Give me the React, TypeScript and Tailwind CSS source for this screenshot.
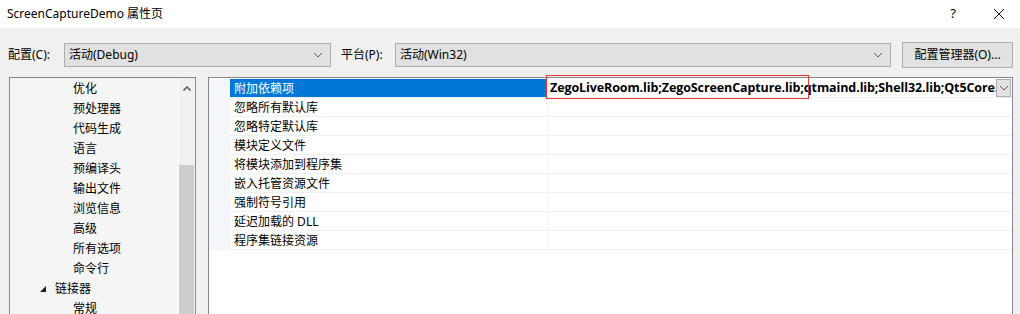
const treeItems = [
  "优化",
  "预处理器",
  "代码生成",
  "语言",
  "预编译头",
  "输出文件",
  "浏览信息",
  "高级",
  "所有选项",
  "命令行",
];

const props = [
  "附加依赖项",
  "忽略所有默认库",
  "忽略特定默认库",
  "模块定义文件",
  "将模块添加到程序集",
  "嵌入托管资源文件",
  "强制符号引用",
  "延迟加载的 DLL",
  "程序集链接资源",
];

const font = { fontFamily: '"Noto Sans", "Noto Sans CJK SC", sans-serif' };

function Chevron({ className }: { className?: string }) {
  return (
    <svg width="10" height="6" viewBox="0 0 10 6" className={className}>
      <path d="M1 1 L5 5 L9 1" fill="none" stroke="#606060" strokeWidth="1" />
    </svg>
  );
}

function Combo({ value, width }: { value: string; width: string }) {
  return (
    <div
      className={`${width} h-[24px] flex items-center justify-between border border-[#adadad] bg-[#e1e1e1] pl-[4px] pr-[7px] text-[12px] text-black`}
    >
      <span>{value}</span>
      <Chevron />
    </div>
  );
}

export default function App() {
  return (
    <div className="w-[1020px] h-[314px] overflow-hidden bg-[#f0f0f0] text-black" style={font}>
      {/* title bar */}
      <div className="h-[28px] bg-white flex items-center justify-between text-[12px]">
        <span className="pl-[7px]">ScreenCaptureDemo 属性页</span>
        <div className="flex items-center">
          <span className="w-[20px] text-center text-[13px]">?</span>
          <svg width="12" height="12" viewBox="0 0 12 12" className="ml-[30px] mr-[15px]">
            <path d="M1 1 L11 11 M11 1 L1 11" stroke="#111" strokeWidth="1" />
          </svg>
        </div>
      </div>

      {/* toolbar */}
      <div className="flex items-center h-[26px] mt-[14px] text-[12px]">
        <span className="pl-[8px] w-[64px]">配置(C):</span>
        <Combo value="活动(Debug)" width="w-[267px]" />
        <span className="ml-[10px] w-[54px]">平台(P):</span>
        <Combo value="活动(Win32)" width="w-[496px]" />
        <button className="ml-[11px] w-[111px] h-[26px] border border-[#adadad] bg-[#e1e1e1] text-[12px]">
          配置管理器(O)...
        </button>
      </div>

      {/* panels */}
      <div className="flex mt-[9px] pl-[9px] gap-[12px]">
        {/* tree */}
        <div className="w-[187px] h-[260px] border border-[#828790] bg-[#f5f5f5] flex">
          <div className="flex-1 text-[12px]">
            {treeItems.map((t) => (
              <div key={t} className="h-[20px] flex items-center pt-[2px] pl-[63px]">
                {t}
              </div>
            ))}
            <div className="h-[20px] flex items-center pt-[2px] pl-[30px]">
              <svg width="6" height="6" viewBox="0 0 6 6" className="mr-[9px]">
                <path d="M6 0 L6 6 L0 6 Z" fill="#1e1e1e" />
              </svg>
              链接器
            </div>
            <div className="h-[20px] flex items-center pt-[2px] pl-[63px]">常规</div>
          </div>
          <div className="w-[16px] mr-[1px] bg-[#f0f0f0] flex flex-col items-center border-l border-white">
            <svg width="8" height="5" viewBox="0 0 8 5" className="mt-[8px]">
              <path d="M0.5 4.5 L4 1 L7.5 4.5" fill="none" stroke="#606060" strokeWidth="1.6" />
            </svg>
            <div className="mt-[74px] w-full flex-1 bg-[#cdcdcd]" />
          </div>
        </div>

        {/* property grid */}
        <div className="w-[805px] h-[260px] border border-[#828790] bg-white relative">
          <div className="pt-[1px] text-[12px]">
            {props.map((p, i) => (
              <div key={p} className="flex h-[19px]">
                <div className="w-[21px] bg-[#f4f6fb]" />
                <div
                  className={`w-[317px] flex items-center pt-[1px] pl-[4px] border-b border-[#eef0f5] ${
                    i === 0 ? "bg-[#0078d7] text-white border-[#0078d7]" : ""
                  }`}
                >
                  {p}
                </div>
                <div className="flex-1 flex items-center border-l border-b border-[#eef0f5] overflow-hidden">
                  {i === 0 && (
                    <div className="flex items-center w-full h-full">
                      <span
                        className="flex-1 overflow-hidden whitespace-nowrap pl-[2px] pt-[1px] text-[12.5px] font-bold tracking-[-0.1px]"
                        style={{ fontFamily: '"Open Sans", "Noto Sans", sans-serif' }}
                      >
                        ZegoLiveRoom.lib;ZegoScreenCapture.lib;qtmaind.lib;Shell32.lib;Qt5Core.lib;Qt5Gui.lib
                      </span>
                      <div className="w-[15px] h-[18px] mr-[1px] bg-[#e1e1e1] border border-[#adadad] flex items-center justify-center">
                        <Chevron />
                      </div>
                    </div>
                  )}
                </div>
              </div>
            ))}
          </div>
          <div className="absolute left-[337px] top-[-3px] w-[263px] h-[24px] border border-[#e53935] pointer-events-none" />
        </div>
      </div>
    </div>
  );
}
